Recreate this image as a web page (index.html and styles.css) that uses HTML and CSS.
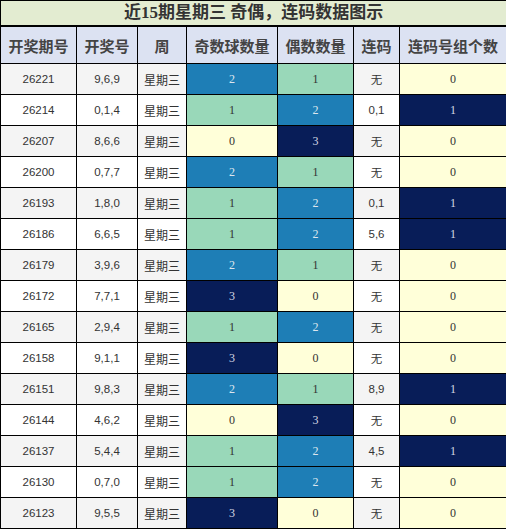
FILE: index.html
```html
<!DOCTYPE html>
<html lang="zh">
<head>
  <meta charset="UTF-8" />
  <title>近15期星期三 奇偶，连码数据图示</title>
  <link rel="stylesheet" href="styles.css">
</head>
<body>

<table class="stat-table">
  <colgroup>
    <col style="width:76px"><col style="width:61px"><col style="width:49px"><col style="width:91px">
    <col style="width:76px"><col style="width:46px"><col style="width:107px">
  </colgroup>
  <thead>
    <tr><th colspan="7" class="title">近15期星期三 奇偶，连码数据图示</th></tr>
    <tr class="head">
      <th>开奖期号</th><th>开奖号</th><th>周</th><th>奇数球数量</th><th>偶数数量</th><th>连码</th><th>连码号组个数</th>
    </tr>
  </thead>
  <tbody>
    <tr><td class="num">26221</td><td class="num">9,6,9</td><td>星期三</td><td class="v2">2</td><td class="v1">1</td><td class="num">无</td><td class="v0">0</td></tr>
    <tr><td class="num">26214</td><td class="num">0,1,4</td><td>星期三</td><td class="v1">1</td><td class="v2">2</td><td class="num">0,1</td><td class="v3">1</td></tr>
    <tr><td class="num">26207</td><td class="num">8,6,6</td><td>星期三</td><td class="v0">0</td><td class="v3">3</td><td class="num">无</td><td class="v0">0</td></tr>
    <tr><td class="num">26200</td><td class="num">0,7,7</td><td>星期三</td><td class="v2">2</td><td class="v1">1</td><td class="num">无</td><td class="v0">0</td></tr>
    <tr><td class="num">26193</td><td class="num">1,8,0</td><td>星期三</td><td class="v1">1</td><td class="v2">2</td><td class="num">0,1</td><td class="v3">1</td></tr>
    <tr><td class="num">26186</td><td class="num">6,6,5</td><td>星期三</td><td class="v1">1</td><td class="v2">2</td><td class="num">5,6</td><td class="v3">1</td></tr>
    <tr><td class="num">26179</td><td class="num">3,9,6</td><td>星期三</td><td class="v2">2</td><td class="v1">1</td><td class="num">无</td><td class="v0">0</td></tr>
    <tr><td class="num">26172</td><td class="num">7,7,1</td><td>星期三</td><td class="v3">3</td><td class="v0">0</td><td class="num">无</td><td class="v0">0</td></tr>
    <tr><td class="num">26165</td><td class="num">2,9,4</td><td>星期三</td><td class="v1">1</td><td class="v2">2</td><td class="num">无</td><td class="v0">0</td></tr>
    <tr><td class="num">26158</td><td class="num">9,1,1</td><td>星期三</td><td class="v3">3</td><td class="v0">0</td><td class="num">无</td><td class="v0">0</td></tr>
    <tr><td class="num">26151</td><td class="num">9,8,3</td><td>星期三</td><td class="v2">2</td><td class="v1">1</td><td class="num">8,9</td><td class="v3">1</td></tr>
    <tr><td class="num">26144</td><td class="num">4,6,2</td><td>星期三</td><td class="v0">0</td><td class="v3">3</td><td class="num">无</td><td class="v0">0</td></tr>
    <tr><td class="num">26137</td><td class="num">5,4,4</td><td>星期三</td><td class="v1">1</td><td class="v2">2</td><td class="num">4,5</td><td class="v3">1</td></tr>
    <tr><td class="num">26130</td><td class="num">0,7,0</td><td>星期三</td><td class="v1">1</td><td class="v2">2</td><td class="num">无</td><td class="v0">0</td></tr>
    <tr><td class="num">26123</td><td class="num">9,5,5</td><td>星期三</td><td class="v3">3</td><td class="v0">0</td><td class="num">无</td><td class="v0">0</td></tr>
  </tbody>
</table>

</body>
</html>
```

FILE: styles.css
```css
body {
  margin: 0;
  padding: 0;
  background: #fff;
  font-family: 'Noto Sans CJK SC', sans-serif;
  color: #333;
}

.stat-table {
  width: 506px;
  table-layout: fixed;
  border-collapse: collapse;
}

.stat-table th,
.stat-table td {
  border: 1px solid #000;
  padding: 0;
  text-align: center;
  overflow: hidden;
  white-space: nowrap;
}

.title {
  height: 24px;
  background-color: #e3ecd1;
  border-bottom: 2px solid #000 !important;
  font-family: 'Liberation Serif', 'Noto Sans CJK SC', serif;
  font-size: 17px;
  font-weight: bold;
  line-height: 24px;
  color: #333;
}

.head th {
  height: 36px;
  background-color: #dce2f2;
  font-size: 15px;
  font-weight: bold;
  color: #444;
}

.stat-table td {
  height: 30px;
  font-size: 12px;
  color: #333;
}

.stat-table tbody tr:nth-child(odd) td {
  background-color: #f4f4f4;
}

.stat-table tbody tr:nth-child(even) td {
  background-color: #fff;
}

.stat-table td.num {
  font-family: 'Liberation Sans', 'Noto Sans CJK SC', sans-serif;
  font-size: 11.5px;
}

.stat-table td.v0,
.stat-table td.v1,
.stat-table td.v2,
.stat-table td.v3 {
  font-family: 'Liberation Serif', serif;
  font-size: 12px;
}

.stat-table tbody tr td.v0 { background-color: #ffffd9; color: #333; }
.stat-table tbody tr td.v1 { background-color: #99d8b9; color: #333; }
.stat-table tbody tr td.v2 { background-color: #1e7eb6; color: #dde6ee; }
.stat-table tbody tr td.v3 { background-color: #081d58; color: #d4d8e4; }
```
